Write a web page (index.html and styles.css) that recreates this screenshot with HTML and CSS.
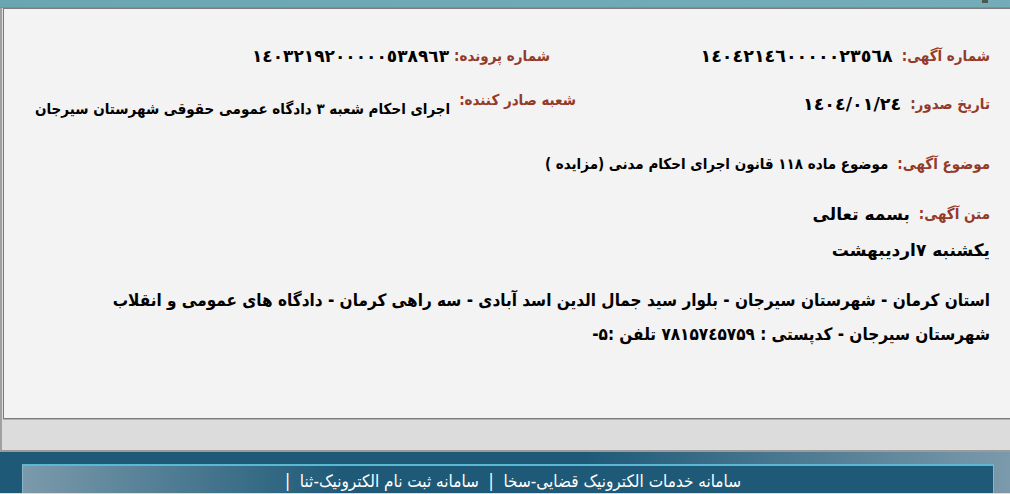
FILE: index.html
```html
<!DOCTYPE html>
<html lang="fa" dir="rtl">
<head>
<meta charset="utf-8">
<title>آگهی</title>
<link rel="stylesheet" href="styles.css">
</head>
<body>
<div class="topbar"><span class="topicon"></span></div>
<div class="frame">
  <div class="panel">
    <div class="row row-1">
      <div class="cell cell-main">
        <span class="label">شماره آگهی:</span>
        <span class="value num">١٤٠٤٢١٤٦٠٠٠٠٠٢٣٥٦٨</span>
      </div>
      <div class="cell cell-side cell-shift">
        <span class="label">شماره پرونده:</span>
        <span class="value num num-tight">١٤٠٣٢١٩٢٠٠٠٠٠٥٣٨٩٦٣</span>
      </div>
    </div>
    <div class="row row-2">
      <div class="cell cell-main">
        <span class="label">تاریخ صدور:</span>
        <span class="value num">١٤٠٤/٠١/٢٤</span>
      </div>
      <div class="cell cell-side">
        <span class="label label-raised">شعبه صادر کننده:</span>
        <span class="value text value-low">اجرای احکام شعبه ٣ دادگاه عمومی حقوقی شهرستان سیرجان</span>
      </div>
    </div>
    <div class="row row-3">
      <span class="label">موضوع آگهی:</span>
      <span class="value text">موضوع ماده ١١٨ قانون اجرای احکام مدنی (مزایده )</span>
    </div>
    <div class="row row-4">
      <span class="label">متن آگهی:</span>
      <span class="value big">بسمه تعالی</span>
    </div>
    <p class="body-line big">یکشنبه ۷اردیبهشت</p>
    <p class="address">استان کرمان - شهرستان سیرجان - بلوار سید جمال الدین اسد آبادی - سه راهی کرمان - دادگاه های عمومی و انقلاب شهرستان سیرجان - کدپستی : ۷۸۱۵۷٤۵۷۵۹ تلفن :۵-</p>
  </div>
</div>
<div class="footer">
  <div class="footer-box">
    <span class="footer-text">سامانه خدمات الکترونیک قضایی-سخا&nbsp; | &nbsp;سامانه ثبت نام الکترونیک-ثنا&nbsp; |</span>
  </div>
</div>
</body>
</html>
```
FILE: styles.css
```css
html, body {
  margin: 0;
  padding: 0;
}
body {
  width: 1010px;
  height: 494px;
  overflow: hidden;
  background: #dcdcdc;
  font-family: "DejaVu Sans", sans-serif;
  direction: rtl;
}
.topbar {
  height: 7px;
  background: linear-gradient(to right, #6aa6b2, #74adb7);
  border-bottom: 1px solid #8a8a8a;
  position: relative;
}
.topicon {
  position: absolute;
  left: 982px;
  top: 0;
  width: 6px;
  height: 3px;
  background: #4a5a50;
}
.frame {
  height: 444px;
  border-left: 2px solid #a0a0a0;
  border-bottom: 2px solid #9a9a9a;
  background: #dcdcdc;
  padding-left: 1px;
  box-sizing: border-box;
}
.panel {
  height: 411px;
  box-sizing: border-box;
  background: #f3f3f3;
  border-left: 1px solid #7c7c7c;
  border-top: 1px solid #7c7c7c;
  border-bottom: 1px solid #7c7c7c;
  box-shadow: 0 1px 0 #8cc2cf;
  padding: 34px 20px 0 16px;
}
.row {
  display: flex;
  align-items: center;
  gap: 9px;
}
.row-1, .row-2 {
  gap: 0;
  height: 26px;
}
.row-2 {
  margin-top: 22px;
}
.cell {
  display: flex;
  align-items: center;
  gap: 9px;
}
.cell-main {
  width: 414px;
  flex-shrink: 0;
}
.cell-shift {
  padding-right: 26px;
  gap: 5px;
}
.label {
  color: #943a2a;
  font-family: "DejaVu Sans Condensed", "DejaVu Sans", sans-serif;
  font-size: 15px;
  font-weight: bold;
  white-space: nowrap;
}
.label-raised {
  position: relative;
  top: -4px;
}
.value {
  color: #000;
  font-size: 15px;
  font-weight: bold;
  white-space: nowrap;
}
.num {
  font-size: 17.5px;
}
.num-tight {
  font-size: 17px;
}
.text {
  font-family: "DejaVu Sans Condensed", "DejaVu Sans", sans-serif;
  font-size: 15px;
}
.value-low {
  position: relative;
  top: 5px;
}
.row-3 {
  margin-top: 34px;
  height: 26px;
}
.row-4 {
  margin-top: 24px;
  height: 26px;
}
.big {
  font-size: 17px;
  font-weight: bold;
}
.body-line {
  margin: 10px 0 0;
  height: 26px;
  line-height: 26px;
  color: #000;
}
.address {
  margin: 20px 0 0;
  font-family: "DejaVu Sans Condensed", "DejaVu Sans", sans-serif;
  font-size: 17px;
  font-weight: bold;
  line-height: 34px;
  color: #000;
  width: 900px;
}
.footer {
  height: 41px;
  box-sizing: border-box;
  padding: 12px 16px 0 22px;
  background: linear-gradient(to right, #1e5a78 0%, #1e5a78 58%, #7b9aab 100%);
}
.footer-box {
  height: 29px;
  box-sizing: border-box;
  border-top: 2px solid #5ab8d4;
  border-left: 1px solid #8ab4c8;
  border-right: 1px solid #8ab4c8;
  background: linear-gradient(to right, #7b9aab 0%, #1e5a78 33%, #1e5a78 100%);
  display: flex;
  justify-content: center;
  padding-left: 10px;
  padding-top: 2px;
}
.footer-text {
  color: #fff;
  font-family: "DejaVu Sans Condensed", "DejaVu Sans", sans-serif;
  font-size: 17px;
  line-height: 26px;
  white-space: nowrap;
}
```
